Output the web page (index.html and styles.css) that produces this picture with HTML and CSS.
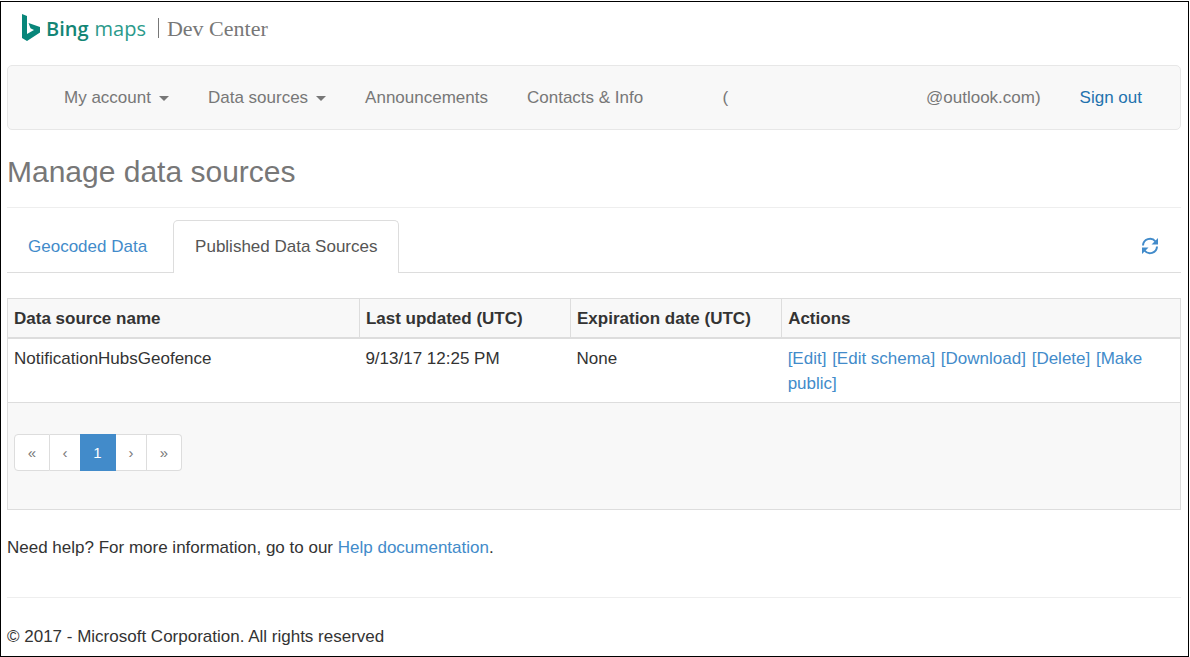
FILE: index.html
```html
<!DOCTYPE html>
<html lang="en">
<head>
<meta charset="utf-8">
<title>Bing Maps Dev Center</title>
<link rel="stylesheet" href="styles.css">
</head>
<body>
<div class="page">
  <header class="brand">
    <svg class="brand-mark" viewBox="0 0 18 27" aria-hidden="true"><path d="M0 0l5 2v18l7-4-3.500-1.700L6.500 9 18 13v5.500L5 27 0 24z"/></svg>
    <span class="brand-bing">Bing</span>
    <span class="brand-maps">maps</span>
    <span class="brand-divider"></span>
    <span class="brand-center">Dev Center</span>
  </header>

  <nav class="navbar">
    <button class="nav-item" type="button">My account <span class="caret"></span></button>
    <button class="nav-item" type="button">Data sources <span class="caret"></span></button>
    <a class="nav-item" href="#">Announcements</a>
    <a class="nav-item" href="#">Contacts &amp; Info</a>
    <span class="nav-user"><span>(</span><span>@outlook.com)</span></span>
    <a class="nav-item nav-signout" href="#">Sign out</a>
  </nav>

  <main>
    <h1 class="title">Manage data sources</h1>
    <div class="tabs">
      <a class="tab" href="#">Geocoded Data</a>
      <a class="tab tab-active" href="#" aria-current="page">Published Data Sources</a>
      <button class="refresh" type="button" aria-label="Refresh">
        <svg class="refresh-icon" viewBox="0 0 18 18" aria-hidden="true">
          <path class="refresh-arc" d="M2 8.500A7 7 0 0 1 14.500 4.500M16 9.500A7 7 0 0 1 3.500 13.500"/>
          <path d="M17 1v6.500h-6.500zM1 17v-6.500h6.500z"/>
        </svg>
      </button>
    </div>

    <table class="grid">
      <thead>
        <tr><th class="col-name">Data source name</th><th class="col-date">Last updated (UTC)</th><th class="col-date">Expiration date (UTC)</th><th>Actions</th></tr>
      </thead>
      <tbody>
        <tr>
          <td>NotificationHubsGeofence</td>
          <td>9/13/17 12:25 PM</td>
          <td>None</td>
          <td class="actions"><a href="#">[Edit]</a> <a href="#">[Edit schema]</a> <a href="#">[Download]</a> <a href="#">[Delete]</a> <a href="#">[Make public]</a></td>
        </tr>
      </tbody>
      <tfoot>
        <tr>
          <td colspan="4">
            <div class="pager">
              <button class="page-link page-wide" type="button">«</button>
              <button class="page-link" type="button">‹</button>
              <button class="page-link page-wide page-current" type="button">1</button>
              <button class="page-link" type="button">›</button>
              <button class="page-link page-wide" type="button">»</button>
            </div>
          </td>
        </tr>
      </tfoot>
    </table>

    <p class="help">Need help? For more information, go to our <a href="#">Help documentation</a>.</p>
  </main>

  <footer class="footer">© 2017 - Microsoft Corporation. All rights reserved</footer>
</div>
</body>
</html>
```

FILE: styles.css
```css
* { box-sizing: border-box; }

body {
  margin: 0;
  background: #fff;
  color: #333;
  font-family: "Liberation Sans", Arial, sans-serif;
  font-size: 17px;
  line-height: 25px;
}

a { color: #428bca; text-decoration: none; }
button { font: inherit; color: inherit; background: none; border: 0; padding: 0; cursor: pointer; }

.page {
  margin: 1px 1px 0 0;
  padding: 0 7px 7px 6px;
  border: 1px solid #000;
}

.brand {
  display: flex;
  align-items: center;
  height: 63px;
  padding: 0 0 10px 15px;
}
.brand-mark { width: 18px; height: 27px; margin: 0 6px 2px 0; fill: #08867a; }
.brand-bing, .brand-maps { font-family: "Open Sans", "Noto Sans", sans-serif; font-size: 20px; color: #138575; }
.brand-bing { font-weight: 600; margin-right: 6px; }
.brand-maps { color: #2b9a8b; }
.brand-divider { width: 1px; height: 20px; margin: 0 8px 2px 12px; background: #777; }
.brand-center { font-family: "Liberation Serif", "Times New Roman", serif; font-size: 22px; color: #777; }

.navbar {
  display: flex;
  align-items: center;
  gap: 1px;
  height: 65px;
  padding: 0 19px 0 37px;
  background: #f8f8f8;
  border: 1px solid #e7e7e7;
  border-radius: 5px;
  color: #777;
}
.nav-item { display: flex; align-items: center; padding: 0 19px; color: #777; white-space: nowrap; }
.caret {
  margin: 2px 0 0 8px;
  border: 5px solid transparent;
  border-top-color: currentColor;
  border-bottom: 0;
}
.nav-user { display: flex; justify-content: space-between; width: 318px; margin: 0 19px 0 auto; }
.nav-signout { color: #2272ae; }

.title {
  margin: 0;
  padding: 24px 0 17px;
  border-bottom: 1px solid #eee;
  color: #777;
  font-size: 30px;
  font-weight: 400;
  line-height: 36px;
}

.tabs { display: flex; gap: 5px; margin-top: 12px; border-bottom: 1px solid #ddd; }
.tab { padding: 13px 20px; border: 1px solid transparent; border-bottom: 0; }
.tab-active {
  margin-bottom: -1px;
  padding: 13px 21px;
  border-color: #ddd;
  border-radius: 5px 5px 0 0;
  background: #fff;
  color: #555;
}
.refresh { display: flex; align-items: center; margin-left: auto; padding: 0 22px; color: #428bca; }
.refresh-icon { width: 18px; height: 18px; fill: currentColor; }
.refresh-arc { fill: none; stroke: currentColor; stroke-width: 2; }

.grid {
  width: 100%;
  margin: 25px 0;
  table-layout: fixed;
  border-collapse: collapse;
  border: 1px solid #ddd;
}
.col-name { width: 30%; }
.col-date { width: 18%; }
.grid th { padding: 7px 6px 6px; border: 1px solid #ddd; border-bottom-width: 2px; background: #f8f8f8; text-align: left; }
.grid td { padding: 7px 6px 6px; border-bottom: 1px solid #ddd; vertical-align: top; }
.actions a { margin-right: 1px; }
.grid tfoot td { padding: 31px 6px 38px; background: #f8f8f8; }

.pager { display: flex; }
.page-link {
  width: 31px;
  height: 37px;
  border: 1px solid #ddd;
  border-left: 0;
  background: #fff;
  color: #777;
  font-size: 15px;
}
.page-wide { width: 35px; }
.page-link:first-child { width: 36px; border-left: 1px solid #ddd; border-radius: 4px 0 0 4px; }
.page-link:last-child { border-radius: 0 4px 4px 0; }
.page-current { width: 36px; margin-left: -1px; border-color: #428bca; background: #428bca; color: #fff; }

.help { margin: 0; }
.footer { margin-top: 37px; padding-top: 26px; border-top: 1px solid #eee; }
```
